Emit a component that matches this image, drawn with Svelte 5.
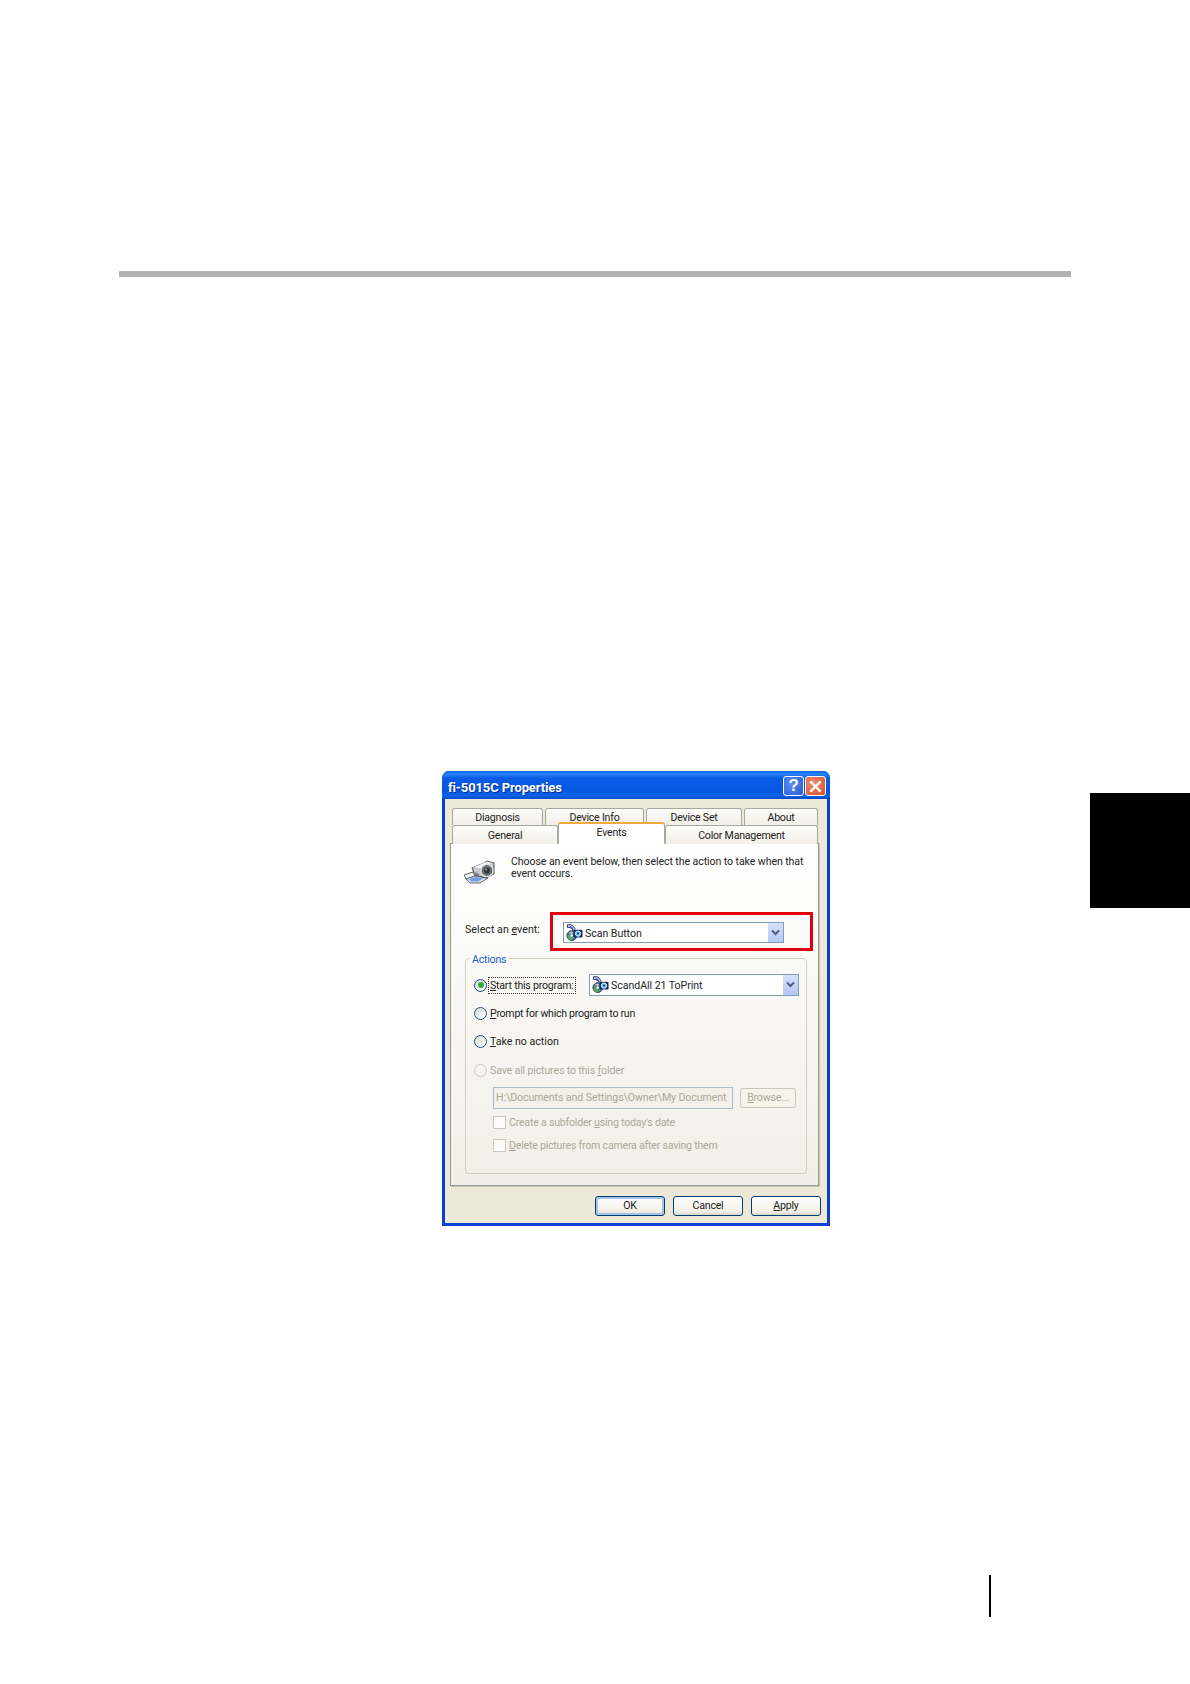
<script>
  const topTabs = ['Diagnosis', 'Device Info', 'Device Set', 'About'];
</script>

<svelte:head><title>fi-5015C Properties</title></svelte:head>

{#snippet smallIcon()}
  <svg class="small-icon" viewBox="0 0 17 17" width="17" height="17" aria-hidden="true">
    <path d="M1.5 .8h4l3.5 3.6-1.6 1.8L4 3.4H1.5z" fill="#e8ecf8" stroke="#232a62" stroke-width="1"/>
    <path d="M4.6 1.8l2.8 2.4-1 1L3.6 2.9z" fill="#3f5fc8"/>
    <circle cx="5.8" cy="11.6" r="4.9" fill="#55848f" stroke="#1d3a4a" stroke-width=".9"/>
    <path d="M1.6 12a4.3 4.3 0 0 0 4.2 4.1l1.2-3-3-2.6z" fill="#5fa860"/>
    <path d="M3 8.6a4 4 0 0 1 4-.6l-1 2.6z" fill="#b8d2d8"/>
    <circle cx="5.8" cy="11.6" r="1.2" fill="#fff"/>
    <rect x="7.5" y="5.8" width="9" height="7.6" rx="1.2" fill="#142568"/>
    <circle cx="12" cy="9.6" r="2.7" fill="#6ccbec" stroke="#e4fbff" stroke-width=".8"/>
    <circle cx="12" cy="9.6" r="1" fill="#102238"/>
  </svg>
{/snippet}

{#snippet arrow()}
  <span class="drop">
    <svg viewBox="0 0 9 7" width="9" height="7" aria-hidden="true">
      <path d="M1 1.5l3.5 3.5L8 1.5" fill="none" stroke="#4d6185" stroke-width="2"/>
    </svg>
  </span>
{/snippet}

<div class="page">
  <div class="rule"></div>

  <div class="middle">
    <section class="dialog">
      <header class="titlebar">
        <h1>fi-5015C Properties</h1>
        <div class="caption">
          <span class="cap help">?</span>
          <span class="cap close">
            <svg viewBox="0 0 12 12" width="13" height="13" aria-hidden="true">
              <path d="M2 2l8 8M10 2l-8 8" stroke="#fff" stroke-width="2.2" stroke-linecap="square"/>
            </svg>
          </span>
        </div>
      </header>

      <div class="client">
        <div class="tabs top">
          {#each topTabs as t}
            <div class="tab">{t}</div>
          {/each}
        </div>
        <div class="tabs bottom">
          <div class="tab">General</div>
          <div class="tab active">Events</div>
          <div class="tab">Color Management</div>
        </div>

        <div class="panel">
          <div class="intro">
            <svg class="cam" viewBox="0 0 32 24" width="32" height="24" aria-hidden="true">
              <path d="M0 15l9-3 2 4-9 3z" fill="#f4f5f6" stroke="#4a4f55" stroke-width=".9"/>
              <path d="M2 19l9-3 13 2-8 5H6z" fill="#d6dce1" stroke="#4a4f55" stroke-width=".8"/>
              <path d="M5 19.5l7-2.5 7 1.4-5 3.2H8z" fill="#6f9be4"/>
              <path d="M8 8l12-5 3-2 7 2v11l-8 4-11-3z" fill="#c6c9cc" stroke="#3e4248" stroke-width=".9"/>
              <path d="M9 7.6l11-4.8 3-1.4 5 1.6-12 5.2z" fill="#f2f3f4"/>
              <circle cx="23" cy="10.5" r="6" fill="#666b71" stroke="#e6e7e9" stroke-width="1.1"/>
              <circle cx="23" cy="10.5" r="3" fill="#34373b"/>
              <circle cx="22" cy="9.5" r="1" fill="#a5abb0"/>
              <path d="M10 12l5 1.6v2.4l-5-1.4z" fill="#83888e"/>
            </svg>
            <p>Choose an event below, then select the action to take when that event occurs.</p>
          </div>

          <div class="event">
            <span class="label">Select an <u>e</u>vent:</span>
            <div class="redbox">
              <div class="combo first">
                {@render smallIcon()}
                <span class="value">Scan Button</span>
                {@render arrow()}
              </div>
            </div>
          </div>

          <fieldset>
            <legend>Actions</legend>

            <div class="opt">
              <span class="radio on"><i></i></span>
              <span class="focus"><u>S</u>tart this program:</span>
              <div class="combo second">
                {@render smallIcon()}
                <span class="value">ScandAll 21 ToPrint</span>
                {@render arrow()}
              </div>
            </div>
            <div class="opt">
              <span class="radio"></span>
              <span class="txt"><u>P</u>rompt for which program to run</span>
            </div>
            <div class="opt">
              <span class="radio"></span>
              <span class="txt wide"><u>T</u>ake no action</span>
            </div>
            <div class="opt off save">
              <span class="radio"></span>
              <span class="txt">Save all pictures to this <u>f</u>older</span>
            </div>

            <div class="path off">
              <div class="pathbox">H:\Documents and Settings\Owner\My Document</div>
              <span class="browse"><u>B</u>rowse...</span>
            </div>
            <div class="check off one">
              <span class="box"></span>
              <span>Create a subfolder <u>u</u>sing today's date</span>
            </div>
            <div class="check off two">
              <span class="box"></span>
              <span><u>D</u>elete pictures from camera after saving them</span>
            </div>
          </fieldset>
        </div>

        <div class="actions">
          <span class="btn default">OK</span>
          <span class="btn">Cancel</span>
          <span class="btn"><u>A</u>pply</span>
        </div>
      </div>
    </section>

    <div class="thumb"></div>
  </div>

  <div class="folio"></div>
</div>

<style>
  :global(body) {
    margin: 0;
    background: #fff;
  }
  .page {
    width: 1190px;
    height: 1684px;
    box-sizing: border-box;
    padding-top: 271px;
    overflow: hidden;
    font-family: Roboto, "Liberation Sans", Arial, sans-serif;
    font-size: 10.6px;
    letter-spacing: -.22px;
    color: #222;
  }
  .rule {
    width: 952px;
    height: 6px;
    margin-left: 119px;
    background: #b2b2b2;
  }
  .middle {
    display: flex;
    align-items: flex-start;
    margin-top: 494px;
  }
  .thumb {
    width: 100px;
    height: 115px;
    margin-top: 22px;
    margin-left: 260px;
    background: #000;
  }
  .folio {
    width: 2px;
    height: 42px;
    margin-top: 349px;
    margin-left: 989px;
    background: #000;
  }

  .dialog {
    width: 388px;
    height: 455px;
    margin-left: 442px;
    flex: none;
    display: flex;
    flex-direction: column;
    box-sizing: border-box;
    border-radius: 7px 7px 0 0;
    background: #0b3fd0;
  }
  .titlebar {
    height: 28px;
    flex: none;
    display: flex;
    align-items: center;
    justify-content: space-between;
    padding: 0 4px 0 6px;
    border-radius: 7px 7px 0 0;
    background: linear-gradient(#0a5fe8 0, #2a86f5 3px, #0a5ce6 7px, #0557e2 20px, #0a62ec 25px, #0348c4 28px);
  }
  h1 {
    margin: 5px 0 0;
    font-family: Roboto, sans-serif;
    font-size: 13px;
    font-weight: 700;
    letter-spacing: -.12px;
    color: #fff;
    text-shadow: 1px 1px 0 #0a2f9a;
  }
  .caption {
    display: flex;
    gap: 1px;
    margin-top: 2px;
  }
  .cap {
    width: 21px;
    height: 20px;
    box-sizing: border-box;
    display: flex;
    align-items: center;
    justify-content: center;
    border: 1px solid #fff;
    border-radius: 3px;
  }
  .help {
    background: radial-gradient(circle at 35% 35%, #5a8df0, #2a5ad8);
    color: #fff;
    font: 700 17px "Liberation Sans", sans-serif;
  }
  .close {
    background: radial-gradient(circle at 35% 35%, #ee8a6c, #d8502c);
  }

  .client {
    flex: 1;
    margin: 0 3px 3px;
    padding: 9px 8px 0 5px;
    background: #ece9d8;
    display: flex;
    flex-direction: column;
    min-height: 0;
  }
  .tabs {
    display: grid;
    margin-left: 2px;
    margin-right: 1px;
  }
  .tabs.top {
    height: 17px;
    grid-template-columns: 91px 99px 96px 74px;
    gap: 2px;
  }
  .tabs.bottom {
    height: 18px;
    grid-template-columns: 106px 107px 153px;
    position: relative;
    z-index: 2;
  }
  .tab {
    display: flex;
    align-items: center;
    justify-content: center;
    border: 1px solid #a5a99f;
    border-bottom: 0;
    border-radius: 3px 3px 0 0;
    background: linear-gradient(#fdfdfb, #f1efe6);
    min-width: 0;
  }
  .top .tab {
    padding-top: 1px;
  }
  .tab.active {
    margin-top: -3px;
    height: 22px;
    padding-bottom: 2px;
    box-sizing: border-box;
    border-top: 2px solid #eeaa3a;
    background: #fff;
    border-bottom: 1px solid #fff;
  }

  .panel {
    height: 343px;
    flex: none;
    box-sizing: border-box;
    padding: 0 10px 0 14px;
    border: 1px solid #919b9c;
    background: linear-gradient(#fff, #f1efe7);
    box-shadow: 1px 1px 0 #c9c6b4;
  }
  .intro {
    display: flex;
    align-items: flex-start;
    gap: 15px;
    height: 69px;
    padding-top: 12px;
    box-sizing: border-box;
    margin-bottom: -1px;
  }
  .cam {
    margin-top: 4px;
    margin-left: -1px;
    flex: none;
  }
  .intro p {
    margin: 0;
    width: 300px;
    line-height: 12px;
    letter-spacing: -.09px;
  }
  .event {
    display: flex;
    align-items: center;
    height: 39px;
  }
  .label {
    width: 85px;
    margin-top: -4px;
    letter-spacing: .05px;
  }
  .redbox {
    width: 263px;
    height: 39px;
    box-sizing: border-box;
    border: 3px solid #e2000f;
    padding: 7px 0 0 10px;
    flex: none;
    margin-right: -6px;
  }
  .combo {
    height: 21px;
    box-sizing: border-box;
    display: flex;
    align-items: center;
    gap: 2px;
    padding-left: 2px;
    border: 1px solid #7f9db9;
    background: #fff;
  }
  .combo.first {
    width: 221px;
    height: 21px;
  }
  .combo.second {
    width: 210px;
    height: 22px;
    margin-left: auto;
    margin-right: 7px;
    margin-top: -1px;
  }
  .small-icon {
    flex: none;
  }
  .value {
    flex: 1;
    padding-top: 2px;
    letter-spacing: -.05px;
  }
  .drop {
    width: 15px;
    height: 100%;
    flex: none;
    display: flex;
    align-items: center;
    justify-content: center;
    background: linear-gradient(#d6e2fb, #b4c8f4);
  }

  fieldset {
    margin: 0;
    width: 342px;
    height: 223px;
    box-sizing: border-box;
    padding: 6px 0 0 8px;
    border: 1px solid #d0d0bf;
    border-radius: 4px;
    min-width: 0;
  }
  legend {
    margin-left: -4px;
    padding: 0 2px;
    height: 14px;
    line-height: 17px;
    color: #1a5bc8;
  }
  .opt {
    display: flex;
    align-items: center;
    height: 28px;
  }
  .save {
    margin-top: 1px;
  }
  .radio {
    width: 13px;
    height: 13px;
    box-sizing: border-box;
    flex: none;
    display: flex;
    align-items: center;
    justify-content: center;
    margin-right: 3px;
    border: 1px solid #1d5281;
    border-radius: 50%;
    background: linear-gradient(135deg, #d9dcd0, #fff);
  }
  .radio i {
    width: 6px;
    height: 6px;
    border-radius: 50%;
    background: #35a84a;
  }
  .txt {
    white-space: nowrap;
    margin-top: 1px;
    letter-spacing: -.28px;
  }
  .txt.wide {
    letter-spacing: 0;
  }
  .save .txt {
    letter-spacing: -.15px;
  }
  .focus {
    flex: none;
    white-space: nowrap;
    outline: 1px dotted #333;
    outline-offset: 1px;
    margin-top: 1px;
  }
  .off {
    color: #aca899;
  }
  .off .radio {
    border-color: #c9c7ba;
    background: none;
  }
  .path {
    display: flex;
    align-items: center;
    gap: 7px;
    margin: 3px 0 0 19px;
  }
  .pathbox {
    width: 240px;
    height: 22px;
    box-sizing: border-box;
    line-height: 20px;
    padding-left: 2px;
    white-space: nowrap;
    overflow: hidden;
    letter-spacing: -.1px;
    border: 1px solid #a9bccc;
    background: #f2f0e8;
  }
  .browse {
    width: 56px;
    height: 20px;
    box-sizing: border-box;
    text-align: center;
    line-height: 18px;
    border: 1px solid #c9c7ba;
    border-radius: 3px;
    background: #f5f4ea;
  }
  .check {
    display: flex;
    align-items: center;
    gap: 3px;
    margin-left: 19px;
    height: 13px;
    white-space: nowrap;
  }
  .check.one {
    margin-top: 7px;
  }
  .check.two {
    margin-top: 10px;
  }
  .box {
    width: 13px;
    height: 13px;
    box-sizing: border-box;
    flex: none;
    border: 1px solid #c9c7ba;
    background: #fbfbf7;
  }

  .actions {
    display: flex;
    justify-content: flex-end;
    gap: 8px;
    margin-top: 10px;
    margin-right: -2px;
  }
  .btn {
    width: 70px;
    height: 20px;
    box-sizing: border-box;
    text-align: center;
    line-height: 18px;
    border: 1px solid #003c74;
    border-radius: 3px;
    background: linear-gradient(#fff, #f2f1e8 80%, #d8d6c8);
  }
  .btn.default {
    box-shadow: inset 0 0 0 2px #a9c4ea;
  }
</style>
